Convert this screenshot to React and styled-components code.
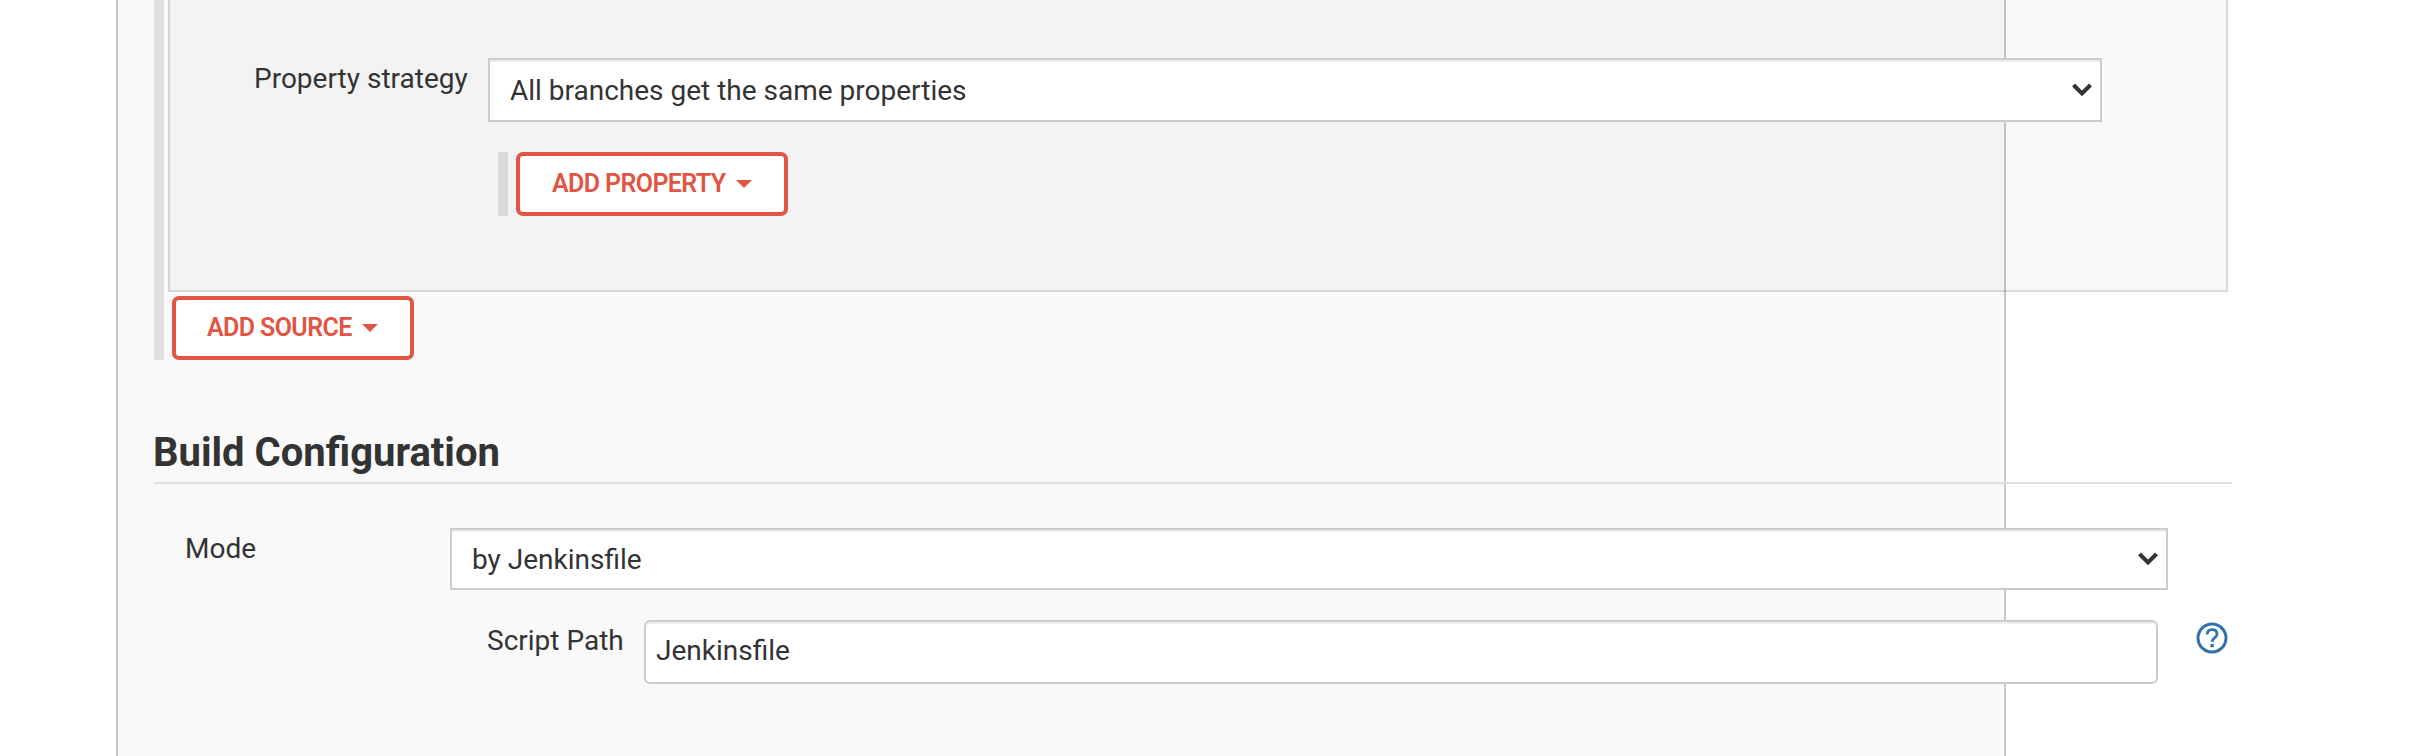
import React from 'react';
import styled, { createGlobalStyle } from 'styled-components';

const GlobalStyle = createGlobalStyle`
  *, *::before, *::after { box-sizing: border-box; }
  body {
    margin: 0;
    background: #fff;
    color: #333;
    font: 400 28px/40px Roboto, sans-serif;
    overflow: hidden;
  }
`;

const ConfigPanel = styled.main`
  width: 1890px;
  height: 756px;
  margin-left: 116px;
  padding-left: 36px;
  background: #f9f9f9;
  border: solid #c8c8c8;
  border-width: 0 2px;
`;

const SourceList = styled.section`
  width: 2074px;
  height: 360px;
  padding-left: 4px;
  border-left: 10px solid #e0e0e0;
`;

const SourceCard = styled.div`
  display: flex;
  align-items: flex-start;
  width: 2060px;
  height: 292px;
  margin-bottom: 4px;
  padding: 58px 0 0 84px;
  background: rgba(0, 0, 0, 0.025);
  border: solid rgba(0, 0, 0, 0.12);
  border-width: 0 2px 2px;
`;

const Label = styled.label`
  flex: none;
  width: ${(p) => p.$width}px;
  padding-top: 1px;
  text-indent: ${(p) => p.$indent || 0}px;
  white-space: nowrap;
`;

const FieldColumn = styled.div`
  display: flex;
  flex-direction: column;
`;

const SelectBox = styled.div`
  display: flex;
  align-items: center;
  justify-content: space-between;
  width: ${(p) => p.$width}px;
  height: ${(p) => p.$height}px;
  padding: 0 8px 0 20px;
  background: #fff;
  border: 2px solid #ccc;
  box-shadow: inset 0 2px 0 #eee;
`;

const Value = styled.span`
  padding-top: 1px;
  white-space: nowrap;
`;

const PropertyList = styled.div`
  margin: 30px 0 0 10px;
  padding-left: 8px;
  border-left: 10px solid #dadada;
`;

const AddButton = styled.button`
  display: flex;
  align-items: center;
  width: ${(p) => p.$width}px;
  height: 64px;
  margin: 0 0 0 ${(p) => p.$left || 0}px;
  padding: 0 0 0 32px;
  background: #fff;
  border: 4px solid #e15544;
  border-radius: 7px;
  color: #e15544;
  font: 600 25px/40px Roboto, sans-serif;
  letter-spacing: -0.6px;
  white-space: nowrap;
`;

const ButtonText = styled.span`
  flex: none;
  width: ${(p) => p.$width}px;
  text-align: left;
  text-indent: ${(p) => p.$indent || 0}px;
`;

const Caret = styled.i`
  margin-left: 10px;
  border: solid transparent;
  border-width: 8px 8px 0;
  border-top-color: #e15544;
`;

const SectionTitle = styled.h2`
  width: 2078px;
  height: 70px;
  margin: 54px 0 44px;
  padding-top: 15px;
  border-bottom: 2px solid #dfdfdf;
  font: 700 40px/48px Roboto, sans-serif;
  text-indent: -1px;
`;

const ModeRow = styled.div`
  display: flex;
  width: 2078px;
  padding-left: 32px;
`;

const ScriptRow = styled.div`
  display: flex;
  width: 1778px;
  margin-top: 30px;
  padding-left: 38px;
`;

const TextInput = styled.input`
  flex: none;
  width: 1514px;
  height: 64px;
  padding: 0 10px 4px;
  background: #fff;
  border: 2px solid #ccc;
  border-radius: 6px;
  box-shadow: inset 0 2px 0 #eee;
  color: #333;
  font: 400 28px/40px Roboto, sans-serif;
`;

const HelpIcon = styled.svg`
  flex: none;
  margin: 2px 0 0 38px;
`;

function Chevron() {
  return (
    <svg width="20" height="14" viewBox="0 0 20 14" fill="none" stroke="#333" strokeWidth="4">
      <path d="M1.5 2 10 10.5 18.5 2" />
    </svg>
  );
}

function Select({ width, height, children }) {
  return (
    <SelectBox $width={width} $height={height}>
      <Value>{children}</Value>
      <Chevron />
    </SelectBox>
  );
}

export default function App() {
  return (
    <>
      <GlobalStyle />
      <ConfigPanel>
        <SourceList>
          <SourceCard>
            <Label $width={234}>Property strategy</Label>
            <FieldColumn>
              <Select width={1614} height={64}>All branches get the same properties</Select>
              <PropertyList>
                <AddButton $width={272}>
                  <ButtonText $width={174}>ADD PROPERTY</ButtonText>
                  <Caret />
                </AddButton>
              </PropertyList>
            </FieldColumn>
          </SourceCard>
          <AddButton $width={242} $left={4}>
            <ButtonText $width={144} $indent={-1}>ADD SOURCE</ButtonText>
            <Caret />
          </AddButton>
        </SourceList>
        <SectionTitle>Build Configuration</SectionTitle>
        <ModeRow>
          <Label $width={264} $indent={-1}>Mode</Label>
          <FieldColumn>
            <Select width={1718} height={62}>by Jenkinsfile</Select>
            <ScriptRow>
              <Label $width={156} $indent={-1}>Script Path</Label>
              <TextInput defaultValue="Jenkinsfile" />
              <HelpIcon width="32" height="32" viewBox="0 0 32 32" fill="none" stroke="#3272a8">
                <circle cx="16" cy="16" r="14" strokeWidth="3" />
                <path d="M11.2 12.5c.1-3 2-4.8 4.9-4.8 3 0 4.9 1.7 4.9 4.3 0 4-4.9 3.9-4.9 7.8" strokeWidth="2.8" />
                <path d="M16.1 22v3.2" strokeWidth="3.4" />
              </HelpIcon>
            </ScriptRow>
          </FieldColumn>
        </ModeRow>
      </ConfigPanel>
    </>
  );
}
